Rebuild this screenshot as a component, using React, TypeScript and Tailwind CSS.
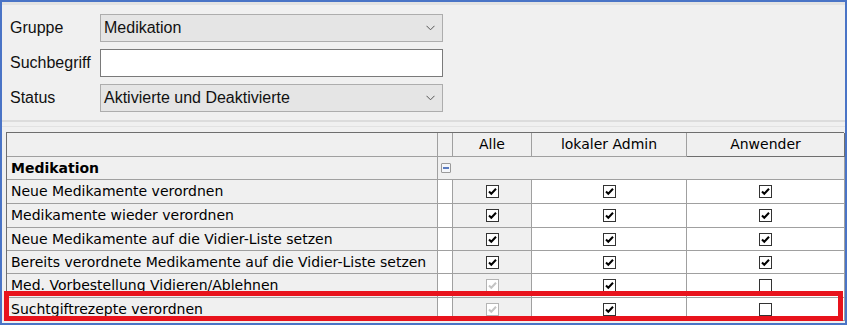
import React from 'react';

// Rights matrix dialog: filter form on top, permission grid below

type Check = 'on' | 'off' | 'dis';

interface Row {
  label: string;
  alle: Check;
  admin: Check;
  user: Check;
  h: string;
}

const rows: Row[] = [
  { label: 'Neue Medikamente verordnen', alle: 'on', admin: 'on', user: 'on', h: 'h-[24px]' },
  { label: 'Medikamente wieder verordnen', alle: 'on', admin: 'on', user: 'on', h: 'h-[24px]' },
  { label: 'Neue Medikamente auf die Vidier-Liste setzen', alle: 'on', admin: 'on', user: 'on', h: 'h-[23px]' },
  { label: 'Bereits verordnete Medikamente auf die Vidier-Liste setzen', alle: 'on', admin: 'on', user: 'on', h: 'h-[23px]' },
  { label: 'Med. Vorbestellung Vidieren/Ablehnen', alle: 'dis', admin: 'on', user: 'off', h: 'h-[24px]' },
  { label: 'Suchtgiftrezepte verordnen', alle: 'dis', admin: 'on', user: 'off', h: 'h-[23px]' },
];

const Chevron = () => (
  <svg width="9" height="6" viewBox="0 0 9 6" className="ml-auto">
    <path d="M0.5 0.8 L4.5 4.8 L8.5 0.8" fill="none" stroke="#555" strokeWidth="1" />
  </svg>
);

const CheckBox: React.FC<{ state: Check }> = ({ state }) => {
  const disabled = state === 'dis';
  return (
    <div
      className={`w-[13px] h-[13px] border bg-white flex items-center justify-center ${
        disabled ? 'border-[#b4b4b4]' : 'border-[#333]'
      }`}
    >
      {state !== 'off' && (
        <svg width="11" height="11" viewBox="0 0 11 11">
          <path
            d="M2 5.5 L4.3 7.8 L9 2.8"
            fill="none"
            stroke={disabled ? '#c4c4c4' : '#000'}
            strokeWidth="2"
          />
        </svg>
      )}
    </div>
  );
};

const cols = 'grid grid-cols-[431px_15px_79px_155px_158px]';

export default function App() {
  return (
    <div className="w-[847px] h-[325px] bg-white">
      <div className="relative w-[847px] h-[325px] border-2 border-[#4a74c6] bg-[#f0f0f0] flex flex-col">
        <div className="h-[3px] bg-[#e3e3e3]" />

        {/* Filter form */}
        <div className="flex flex-col gap-[7px] pt-[9px] text-[16px] text-[#111]" style={{ fontFamily: '"Liberation Sans", Arial, sans-serif' }}>
          <div className="flex items-center">
            <span className="w-[98px] pl-[8px]">Gruppe</span>
            <div className="w-[343px] h-[28px] border border-[#adadad] bg-[#e5e5e5] flex items-center pl-[3px] pr-[7px]">
              <span>Medikation</span>
              <Chevron />
            </div>
          </div>
          <div className="flex items-center">
            <span className="w-[98px] pl-[8px]">Suchbegriff</span>
            <div className="w-[343px] h-[28px] border border-[#7a7a7a] bg-white" />
          </div>
          <div className="flex items-center">
            <span className="w-[98px] pl-[8px]">Status</span>
            <div className="w-[343px] h-[28px] border border-[#adadad] bg-[#e5e5e5] flex items-center pl-[3px] pr-[7px]">
              <span>Aktivierte und Deaktivierte</span>
              <Chevron />
            </div>
          </div>
        </div>

        <div className="mt-[8px] h-[2px] bg-[#dcdcdc]" />
        <div className="mt-[4px] h-[1px] bg-[#e2e2e2]" />

        {/* Permission grid */}
        <div
          className="ml-[4px] mt-[5px] w-[838px] border-l border-t border-[#6e6e6e] text-[14px] text-black"
          style={{ fontFamily: '"DejaVu Sans", Verdana, sans-serif' }}
        >
          <div className={`${cols} h-[24px]`}>
            <div className="border-r border-b border-[#a0a0a0] bg-[#f0f0f0]" />
            <div className="border-r border-b border-[#a0a0a0] bg-[#f0f0f0]" />
            <div className="border-r border-b border-[#a0a0a0] bg-[#f0f0f0] flex items-center justify-center">Alle</div>
            <div className="border-r border-b border-[#a0a0a0] bg-[#f0f0f0] flex items-center justify-center">lokaler Admin</div>
            <div className="border-r border-b border-[#6e6e6e] bg-[#f0f0f0] flex items-center justify-center">Anwender</div>
          </div>

          <div className={`${cols} h-[23px]`}>
            <div className="border-r border-b border-[#a0a0a0] bg-[#f0f0f0] flex items-center pl-[4px] font-bold">Medikation</div>
            <div className="border-b border-[#a0a0a0] bg-[#f0f0f0] flex items-center justify-center pl-[1px]">
              <div className="w-[10px] h-[10px] border border-[#9a9a9a] rounded-[1px] bg-[#f4f6fa] flex items-center justify-center">
                <div className="w-[6px] h-[2px] bg-[#5b7cc0]" />
              </div>
            </div>
            <div className="col-span-3 border-r border-b border-[#a0a0a0] bg-[#f0f0f0]" />
          </div>

          {rows.map((r) => (
            <div key={r.label} className={`${cols} ${r.h}`}>
              <div className="border-r border-b border-[#a0a0a0] bg-[#f0f0f0] flex items-center pl-[4px] whitespace-nowrap">{r.label}</div>
              <div className="border-r border-b border-[#a0a0a0] bg-white" />
              <div className="border-r border-b border-[#a0a0a0] bg-[#f0f0f0] flex items-center justify-center">
                <CheckBox state={r.alle} />
              </div>
              <div className="border-r border-b border-[#a0a0a0] bg-white flex items-center justify-center">
                <CheckBox state={r.admin} />
              </div>
              <div className="border-r border-b border-[#a0a0a0] bg-white flex items-center justify-center">
                <CheckBox state={r.user} />
              </div>
            </div>
          ))}
        </div>

        {/* Red highlight annotation */}
        <div className="absolute left-[2px] top-[289px] w-[839px] h-[30px] border-[5px] border-[#e8131c] pointer-events-none" />
      </div>
    </div>
  );
}
